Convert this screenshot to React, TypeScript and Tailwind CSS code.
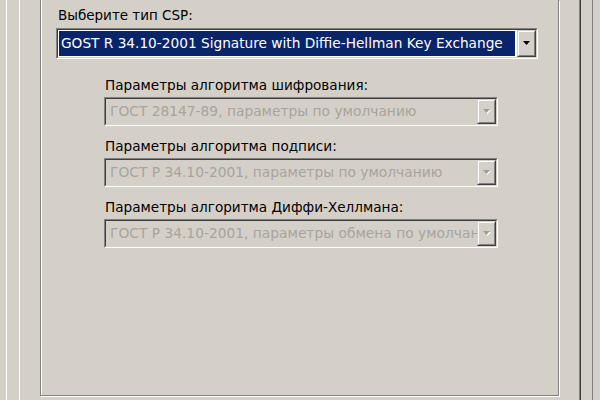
const font = { fontFamily: '"DejaVu Sans", Verdana, sans-serif' };

function Arrow({ disabled }: { disabled?: boolean }) {
  return (
    <svg width="8" height="5" viewBox="0 0 8 5" className="block">
      {disabled && <path d="M1 1h7L4.5 5z" fill="#ffffff" />}
      <path d="M0 0h7L3.5 4z" fill={disabled ? "#a09d96" : "#000"} />
    </svg>
  );
}

function DropButton({ disabled }: { disabled?: boolean }) {
  return (
    <div className="h-full w-[19px] shrink-0 border border-t-[#d4d0c8] border-l-[#d4d0c8] border-r-[#404040] border-b-[#404040]">
      <div className="flex h-full w-full items-center justify-center border border-t-white border-l-white border-r-[#808080] border-b-[#808080] bg-[#d4d0c8] pl-[1px]">
        <Arrow disabled={disabled} />
      </div>
    </div>
  );
}

function Combo({
  value,
  width,
  disabled,
}: {
  value: string;
  width: string;
  disabled?: boolean;
}) {
  return (
    <div
      className={`${width} ${disabled ? "h-[29px]" : "h-[31px]"} border border-t-[#808080] border-l-[#808080] border-r-white border-b-white`}
    >
      <div
        className={`flex h-full w-full items-stretch border border-t-[#404040] border-l-[#404040] border-r-[#d4d0c8] border-b-[#d4d0c8] ${
          disabled ? "bg-[#d4d0c8]" : "bg-white"
        }`}
      >
        {disabled ? (
          <div className="flex min-w-0 flex-1 items-center overflow-hidden whitespace-nowrap pl-[4px] text-[13.8px] text-[#a7a49d]">
            {value}
          </div>
        ) : (
          <div className="flex min-w-0 flex-1 p-[1px] pr-[2px]">
            <div className="flex flex-1 items-center overflow-hidden whitespace-nowrap bg-[#0a246a] pl-[2px] text-[13.7px] text-white">
              {value}
            </div>
          </div>
        )}
        <DropButton disabled={disabled} />
      </div>
    </div>
  );
}

function Param({ label, value }: { label: string; value: string }) {
  return (
    <div className="mt-[12px] first:mt-[18px]">
      <div className="ml-[1px] h-[17px] text-[13.6px] leading-[17px] text-black">
        {label}
      </div>
      <div className="mt-[3px]">
        <Combo value={value} width="w-[394px]" disabled />
      </div>
    </div>
  );
}

export default function App() {
  return (
    <div
      className="flex h-[400px] w-[600px] overflow-hidden bg-[#d4d0c8] pl-[6px] pr-[7px]"
      style={font}
    >
      <div className="flex flex-1 border-l border-r border-l-white border-r-[#808080] pl-[12px] pr-[11px]">
        <div className="flex flex-1 border-l border-r border-l-white border-r-[#404040] pl-[20px] pr-[21px] shadow-[inset_-1px_0_0_#808080]">
          <div className="h-[396px] flex-1 border-b border-l border-r border-[#808080] pl-[15px] pt-[7px] shadow-[inset_1px_0_0_#ffffff,1px_1px_0_#ffffff]">
            <div className="ml-[2px] h-[17px] text-[13.5px] leading-[17px] text-black">
              Выберите тип CSP:
            </div>
            <div className="mt-[4px]">
              <Combo
                value="GOST R 34.10-2001 Signature with Diffie-Hellman Key Exchange"
                width="w-[482px]"
              />
            </div>
            <div className="ml-[48px]">
              <Param
                label="Параметры алгоритма шифрования:"
                value="ГОСТ 28147-89, параметры по умолчанию"
              />
              <Param
                label="Параметры алгоритма подписи:"
                value="ГОСТ Р 34.10-2001, параметры по умолчанию"
              />
              <Param
                label="Параметры алгоритма Диффи-Хеллмана:"
                value="ГОСТ Р 34.10-2001, параметры обмена по умолчанию"
              />
            </div>
          </div>
        </div>
      </div>
    </div>
  );
}
